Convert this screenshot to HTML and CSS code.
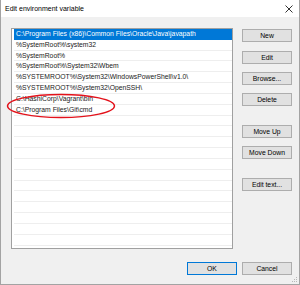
FILE: index.html
```html
<!DOCTYPE html>
<html lang="en">
<head>
    <meta charset="UTF-8">
    <title>Edit environment variable</title>
    <link rel="stylesheet" href="styles.css">
</head>
<body>
    <div class="dialog">
        <!-- Title bar -->
        <div class="titlebar">
            <span class="title">Edit environment variable</span>
            <svg class="close" width="8" height="8" viewBox="0 0 8 8">
                <path d="M0.5 0.5 L7.5 7.5 M7.5 0.5 L0.5 7.5" stroke="#333" stroke-width="1"/>
            </svg>
        </div>

        <div class="content">
            <div class="path-list">
                <div class="row selected">C:\Program Files (x86)\Common Files\Oracle\Java\javapath</div>
                <div class="row">%SystemRoot%\system32</div>
                <div class="row">%SystemRoot%</div>
                <div class="row">%SystemRoot%\System32\Wbem</div>
                <div class="row">%SYSTEMROOT%\System32\WindowsPowerShell\v1.0\</div>
                <div class="row">%SYSTEMROOT%\System32\OpenSSH\</div>
                <div class="row">C:\HashiCorp\Vagrant\bin</div>
                <div class="row">C:\Program Files\Git\cmd</div>
                <div class="row"></div>
                <div class="row"></div>
                <div class="row"></div>
                <div class="row"></div>
                <div class="row"></div>
                <div class="row"></div>
                <div class="row"></div>
                <div class="row"></div>
                <div class="row"></div>
                <div class="row"></div>
                <div class="row"></div>
                <div class="row"></div>
                <div class="row"></div>
            </div>

            <div class="side-buttons">
                <button class="btn">New</button>
                <button class="btn">Edit</button>
                <button class="btn">Browse...</button>
                <button class="btn">Delete</button>
                <button class="btn group">Move Up</button>
                <button class="btn">Move Down</button>
                <button class="btn group">Edit text...</button>
            </div>
        </div>

        <div class="footer">
            <button class="btn default">OK</button>
            <button class="btn">Cancel</button>
        </div>

        <!-- red annotation round the two new entries -->
        <svg class="mark" width="112" height="28" viewBox="0 0 112 28">
            <ellipse cx="56" cy="14" rx="53.5" ry="11.5" fill="none" stroke="#e3121b" stroke-width="1.4"/>
        </svg>

        <svg class="grip" width="6" height="6" viewBox="0 0 6 6">
            <rect x="4" y="0" width="1" height="1" fill="#b8b8b8"/>
            <rect x="2" y="2" width="1" height="1" fill="#b8b8b8"/>
            <rect x="4" y="2" width="1" height="1" fill="#b8b8b8"/>
            <rect x="0" y="4" width="1" height="1" fill="#b8b8b8"/>
            <rect x="2" y="4" width="1" height="1" fill="#b8b8b8"/>
            <rect x="4" y="4" width="1" height="1" fill="#b8b8b8"/>
        </svg>
    </div>
</body>
</html>
```

FILE: styles.css
```css
body { margin: 0; font-family: "Liberation Sans", Arial, sans-serif; }

.dialog {
    position: relative;
    width: 300px; height: 285px;
    box-sizing: border-box;
    background: #f0f0f0;
    border: 1px solid #a3a3a3;
    border-top: none;
    overflow: hidden;
}

/* Title bar */
.titlebar {
    height: 17px;
    background: #fff;
    display: flex;
    align-items: center;
    justify-content: space-between;
    padding: 0 4px 0 4px;
}
.title { font-size: 7px; color: #000; }
.close { margin-right: 2px; }

.content {
    display: flex;
    padding: 11px 0 0 10px;
}

/* Path list */
.path-list {
    width: 222px; height: 221px;
    box-sizing: border-box;
    background: #fff;
    border: 1px solid #a0a0a0;
    padding: 0 0 0 2px;
    overflow: hidden;
}
.row {
    height: 10.83px;
    box-sizing: border-box;
    border-bottom: 1px solid #eeeeee;
    font-size: 6.8px;
    line-height: 10px;
    padding-left: 2px;
    color: #1a1a1a;
    white-space: nowrap;
}
.row.selected {
    background: #0078d7;
    color: #fff;
    border-bottom-color: #0078d7;
}

/* Buttons */
.side-buttons {
    display: flex;
    flex-direction: column;
    margin-left: 9px;
    padding-top: 1px;
}
.btn {
    width: 50px; height: 13px;
    box-sizing: border-box;
    margin: 0 0 8px 0;
    padding: 0;
    background: #e1e1e1;
    border: 1px solid #adadad;
    font-family: "Liberation Sans", Arial, sans-serif;
    font-size: 6.8px;
    color: #000;
}
.side-buttons .btn:first-child { margin-bottom: 9px; }
.side-buttons .btn.group { margin-top: 11px; }
.btn.default { border-color: #0078d7; }

.footer {
    display: flex;
    justify-content: flex-end;
    gap: 5px;
    padding: 13px 7px 0 0;
}
.footer .btn { margin: 0; }

.mark { position: absolute; left: 4px; top: 92px; }
.grip { position: absolute; right: 1px; bottom: 1px; }
```
